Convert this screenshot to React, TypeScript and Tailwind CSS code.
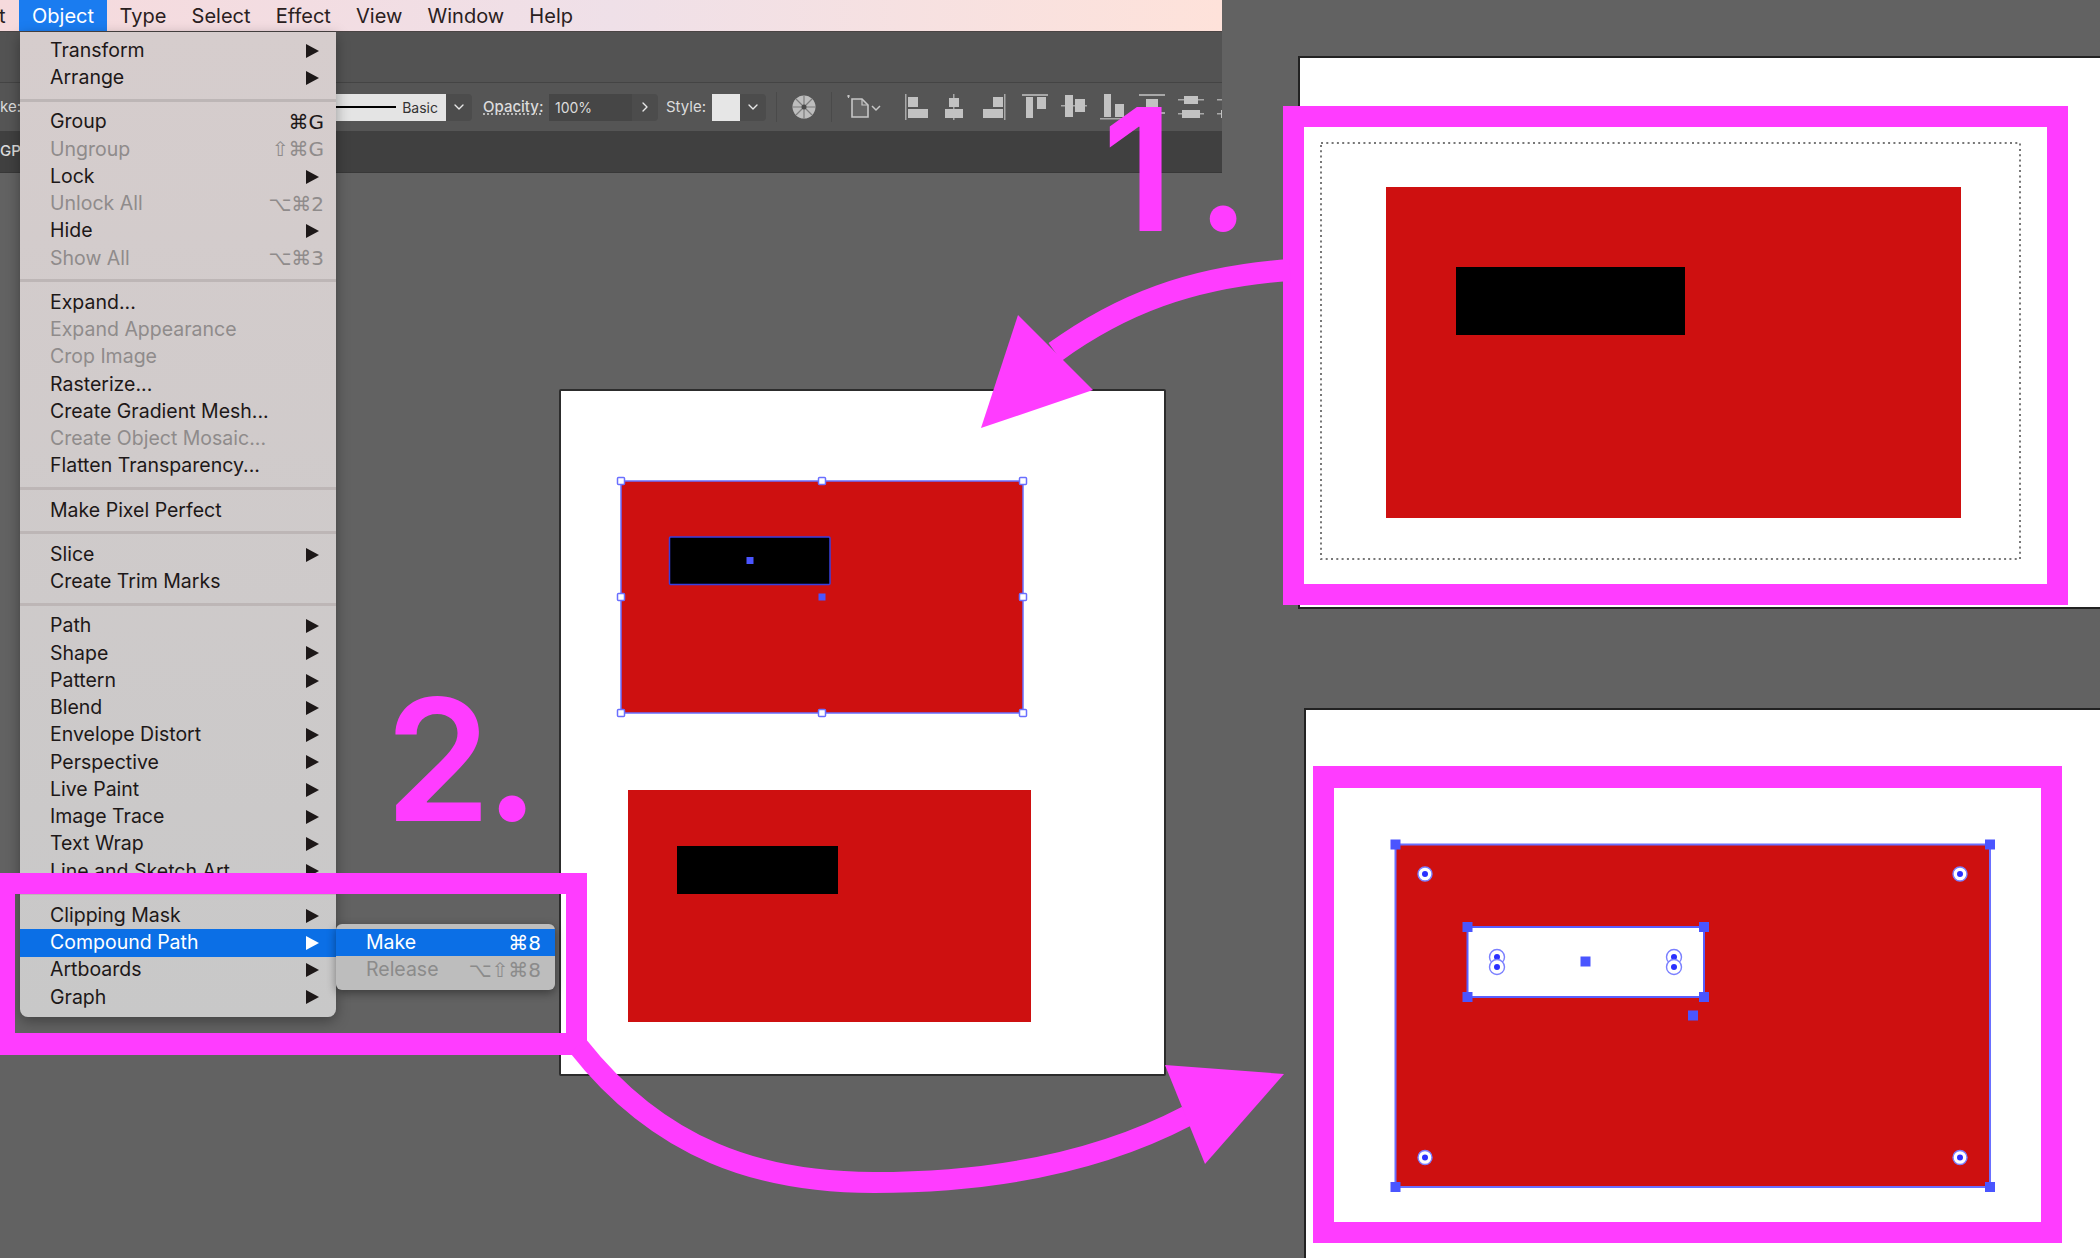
import { ChevronDown, ChevronRight } from "lucide-react";

const MAGENTA = "#ff3cff";
const BLUE = "#4a55ff";

interface MenuRow {
  label: string;
  shortcut?: string;
  arrow?: boolean;
  disabled?: boolean;
  active?: boolean;
}

const menuGroups: MenuRow[][] = [
  [
    { label: "Transform", arrow: true },
    { label: "Arrange", arrow: true },
  ],
  [
    { label: "Group", shortcut: "⌘G" },
    { label: "Ungroup", shortcut: "⇧⌘G", disabled: true },
    { label: "Lock", arrow: true },
    { label: "Unlock All", shortcut: "⌥⌘2", disabled: true },
    { label: "Hide", arrow: true },
    { label: "Show All", shortcut: "⌥⌘3", disabled: true },
  ],
  [
    { label: "Expand..." },
    { label: "Expand Appearance", disabled: true },
    { label: "Crop Image", disabled: true },
    { label: "Rasterize..." },
    { label: "Create Gradient Mesh..." },
    { label: "Create Object Mosaic...", disabled: true },
    { label: "Flatten Transparency..." },
  ],
  [{ label: "Make Pixel Perfect" }],
  [
    { label: "Slice", arrow: true },
    { label: "Create Trim Marks" },
  ],
  [
    { label: "Path", arrow: true },
    { label: "Shape", arrow: true },
    { label: "Pattern", arrow: true },
    { label: "Blend", arrow: true },
    { label: "Envelope Distort", arrow: true },
    { label: "Perspective", arrow: true },
    { label: "Live Paint", arrow: true },
    { label: "Image Trace", arrow: true },
    { label: "Text Wrap", arrow: true },
    { label: "Line and Sketch Art", arrow: true },
  ],
  [
    { label: "Clipping Mask", arrow: true },
    { label: "Compound Path", arrow: true, active: true },
    { label: "Artboards", arrow: true },
    { label: "Graph", arrow: true },
  ],
];

function Row({ row }: { row: MenuRow }) {
  const color = row.active ? "bg-[#0b6fe6] text-white" : row.disabled ? "text-[#8f8b8b]" : "text-[#1d1818]";
  return (
    <div className={`flex items-center justify-between h-[27.25px] pl-[30px] pr-[12px] ${color}`}>
      <span>{row.label}</span>
      {row.shortcut && <span className="font-['DejaVu_Sans',sans-serif] text-[20px]">{row.shortcut}</span>}
      {row.arrow && (
        <svg width="13" height="14" viewBox="0 0 13 14" className="mr-[5px]">
          <polygon points="0,0 13,7 0,14" fill="currentColor" />
        </svg>
      )}
    </div>
  );
}

function ObjectMenu() {
  return (
    <div className="absolute left-[20px] top-[32px] w-[316px] h-[985px] pt-[5px] rounded-b-lg bg-gradient-to-b from-[#d6cdcd] to-[#c8c8c8] shadow-[0_4px_14px_rgba(0,0,0,0.35)] text-[19.5px] leading-none">
      {menuGroups.map((group, i) => (
        <div key={i}>
          {i > 0 && (
            <div className="h-[17px] flex items-center">
              <div className="h-[3px] w-full bg-[#bdb6b6]" />
            </div>
          )}
          {group.map((row) => (
            <Row key={row.label} row={row} />
          ))}
        </div>
      ))}
    </div>
  );
}

function SubMenu() {
  return (
    <div className="absolute left-[336px] top-[924px] w-[219px] h-[66px] pt-[5px] rounded-md bg-[#bdbdbd] shadow-[0_3px_10px_rgba(0,0,0,0.4)] text-[19.5px] leading-none">
      <div className="flex items-center justify-between h-[27.25px] pl-[30px] pr-[14px] bg-[#0b6fe6] text-white">
        <span>Make</span>
        <span className="font-['DejaVu_Sans',sans-serif] text-[20px]">⌘8</span>
      </div>
      <div className="flex items-center justify-between h-[27px] pl-[30px] pr-[14px] text-[#8b8b8b]">
        <span>Release</span>
        <span className="font-['DejaVu_Sans',sans-serif] text-[20px]">⌥⇧⌘8</span>
      </div>
    </div>
  );
}

function MenuBar() {
  const items = ["Type", "Select", "Effect", "View", "Window", "Help"];
  return (
    <div className="flex items-center h-[32px] shrink-0 bg-gradient-to-r from-[#f6dadc] via-[#efe0e8] to-[#fee2da] text-[#2a2020] text-[20px] border-b border-[#4a4444]">
      <span className="w-[20px] -ml-[1px]">t</span>
      <span className="h-full flex items-center px-[13px] bg-[#1a7cf0] text-white">Object</span>
      {items.map((item) => (
        <span key={item} className="px-[12.6px]">
          {item}
        </span>
      ))}
    </div>
  );
}

function Dropdown({ right }: { right?: boolean }) {
  return (
    <span className="flex shrink-0 items-center justify-center w-[26px] h-[27px] bg-[#4c4c4c] rounded-r text-[#e8e8e8]">
      {right ? <ChevronRight size={16} /> : <ChevronDown size={16} />}
    </span>
  );
}

// Align and distribute icons, each a 26x26 drawing with bars and rails
const alignIcons: { rails: number[][]; bars: number[][] }[] = [
  { rails: [[0, 0, 1.5, 26]], bars: [[3, 3, 10, 10], [3, 15, 20, 9]] },
  { rails: [[9, 0, 1.5, 26]], bars: [[5, 4, 10, 9], [1, 15, 18, 9]] },
  { rails: [[21, 0, 1.5, 26]], bars: [[10, 3, 10, 10], [0, 15, 20, 9]] },
  { rails: [[0, 0, 26, 2]], bars: [[4, 3, 7, 21], [15, 3, 9, 12]] },
  { rails: [[0, 11, 26, 1.5]], bars: [[4, 1, 8, 22], [14, 5, 10, 13]] },
  { rails: [[0, 24, 26, 1.5]], bars: [[4, 0, 7, 23], [15, 10, 9, 13]] },
  { rails: [[0, 0, 26, 2], [0, 18, 26, 2]], bars: [[7, 5, 12, 8]] },
  { rails: [[0, 5, 26, 1.5], [0, 19, 26, 1.5]], bars: [[6, 2, 14, 8], [4, 16, 18, 8]] },
  { rails: [[0, 5, 26, 1.5], [0, 19, 26, 1.5]], bars: [[6, 2, 14, 8], [4, 16, 18, 8]] },
];

function AlignIcon({ rails, bars }: { rails: number[][]; bars: number[][] }) {
  return (
    <svg width="26" height="26" viewBox="0 0 26 26" className="shrink-0">
      {rails.map((r, i) => (
        <rect key={i} x={r[0]} y={r[1]} width={r[2]} height={r[3]} fill="#a8a8a8" />
      ))}
      {bars.map((r, i) => (
        <rect key={i} x={r[0]} y={r[1]} width={r[2]} height={r[3]} fill="#c2c2c2" />
      ))}
    </svg>
  );
}

function ControlBar() {
  return (
    <div className="flex items-center h-[49px] shrink-0 bg-[#555555] border-t border-[#444444] text-[#dcdcdc] text-[15px] overflow-hidden">
      <span className="w-[336px] shrink-0">ke:</span>
      <div className="flex shrink-0 items-center justify-end w-[110px] h-[27px] pr-[8px] gap-[6px] bg-[#e4e4e4] text-[#333333] text-[14px]">
        <span className="w-[60px] h-[2px] bg-black" />
        <span>Basic</span>
      </div>
      <Dropdown />
      <span className="ml-[11px] w-[57px] shrink-0 font-medium underline decoration-dotted underline-offset-2">Opacity:</span>
      <div className="ml-[9px] flex shrink-0 items-center w-[83px] h-[27px] pl-[6px] bg-[#464646] text-[14px]">100%</div>
      <Dropdown right />
      <span className="ml-[8px] w-[46px] shrink-0">Style:</span>
      <span className="w-[28px] h-[27px] shrink-0 bg-[#e6e6e6]" />
      <Dropdown />
      <span className="ml-[10px] w-px h-[30px] shrink-0 bg-[#4a4a4a]" />
      <svg width="24" height="24" viewBox="0 0 24 24" className="ml-[15px] shrink-0">
        <circle cx="12" cy="12" r="11.5" fill="#bdbdbd" />
        <g stroke="#7d7d7d" strokeWidth="1.2">
          <path d="M12 1V23M1 12H23M4 4L20 20M20 4L4 20" />
        </g>
        <circle cx="12" cy="12" r="2.5" fill="#4a4a4a" />
      </svg>
      <span className="ml-[15px] w-px h-[30px] shrink-0 bg-[#4a4a4a]" />
      <svg width="34" height="24" viewBox="0 0 34 24" className="ml-[15px] shrink-0" fill="none">
        <path d="M5 4H15L21 10V22H5Z" fill="#666666" stroke="#c6c6c6" strokeWidth="1.6" />
        <path d="M0 1H3M1.5 0V3M15 4V10H21" stroke="#c6c6c6" strokeWidth="1.2" />
        <path d="M25 11L29 15L33 11" stroke="#c6c6c6" strokeWidth="1.5" />
      </svg>
      <div className="ml-[24px] flex shrink-0 items-center gap-[13px]">
        {alignIcons.map((icon, i) => (
          <AlignIcon key={i} rails={icon.rails} bars={icon.bars} />
        ))}
      </div>
    </div>
  );
}

function TopWindow() {
  return (
    <div className="absolute left-0 top-0 w-[1222px] flex flex-col">
      <MenuBar />
      <div className="h-[50px] shrink-0 bg-[#535353]" />
      <ControlBar />
      <div className="flex items-center h-[42px] shrink-0 bg-[#404040] border-b border-[#383838] text-[#dcdcdc] text-[15px] font-medium">
        GPU
      </div>
    </div>
  );
}

function Handle({ x, y }: { x: number; y: number }) {
  return <rect x={x - 3.5} y={y - 3.5} width="7" height="7" rx="1" fill="white" stroke="#6a6fff" strokeWidth="1.5" />;
}

function Dot({ x, y, s = 7 }: { x: number; y: number; s?: number }) {
  return <rect x={x - s / 2} y={y - s / 2} width={s} height={s} fill={BLUE} />;
}

function Ring({ x, y, r = 7 }: { x: number; y: number; r?: number }) {
  return (
    <g>
      <circle cx={x} cy={y} r={r} fill="white" stroke="#7a7fff" strokeWidth="1.4" />
      <circle cx={x} cy={y} r="3" fill="#2a30ff" />
    </g>
  );
}

// Selection marks and arrows share the page's own coordinates
function Overlay() {
  const midX = [621, 822, 1023];
  const midY = [481, 597, 713];
  return (
    <svg className="absolute inset-0" width="2100" height="1258" viewBox="0 0 2100 1258" fill="none">
      <rect x="1321" y="143" width="699" height="416" stroke="#777777" strokeWidth="2" strokeDasharray="2 3.3" />

      <rect x="621" y="481" width="402" height="232" stroke="#6a6fff" strokeWidth="1.5" />
      <rect x="669.5" y="537" width="160.5" height="47.5" rx="1" stroke="#3a3fdd" strokeWidth="1.5" />
      {midX.map((x) =>
        midY.map((y) => (x === 822 && y === 597 ? null : <Handle key={`${x}-${y}`} x={x} y={y} />)),
      )}
      <Dot x={750} y={560.5} />
      <Dot x={822} y={597} />

      <rect x="1395.5" y="844.5" width="594.5" height="342.5" stroke="#6a6fff" strokeWidth="2" />
      <rect x="1467.5" y="927" width="236.5" height="70" stroke="#5a5fff" strokeWidth="2" />
      {[1395.5, 1990].map((x) => [844.5, 1187].map((y) => <Dot key={`${x}-${y}`} x={x} y={y} s={10} />))}
      {[1467.5, 1704].map((x) => [927, 997].map((y) => <Dot key={`${x}-${y}`} x={x} y={y} s={10} />))}
      {[1425, 1960].map((x) => [874, 1157.5].map((y) => <Ring key={`${x}-${y}`} x={x} y={y} />))}
      {[1497, 1674].map((x) => [957, 967].map((y) => <Ring key={`${x}-${y}`} x={x} y={y} r={7.5} />))}
      <Dot x={1585.5} y={961.5} s={10} />
      <Dot x={1693} y={1015.5} s={10} />

      <path d="M1290 270C1190 277 1120 305 1055 352" stroke={MAGENTA} strokeWidth="22" />
      <polygon points="981,428 1018,315 1093,390" fill={MAGENTA} />
      <path d="M578 1046C660 1150 760 1182.5 874 1182.5C960 1182.5 1080 1172 1187 1116" stroke={MAGENTA} strokeWidth="21" />
      <polygon points="1165,1065 1284,1074 1205,1164" fill={MAGENTA} />
    </svg>
  );
}

export default function App() {
  return (
    <div className="relative w-[2100px] h-[1258px] overflow-hidden bg-[#626262] font-['Inter',sans-serif]">
      <TopWindow />

      {/* Artboards on the canvas */}
      <div className="absolute left-[1298px] top-[56px] w-[802px] h-[553px] bg-white border-t-2 border-l-2 border-b-2 border-[#222222]" />
      <div className="absolute left-[1304px] top-[708px] w-[796px] h-[550px] bg-white border-t-2 border-l-2 border-[#222222]" />
      <div className="absolute left-[559px] top-[389px] w-[607px] h-[687px] bg-white border-2 border-[#2c2c2c] rounded-[2px]" />

      {/* Middle artboard artwork */}
      <div className="absolute left-[621px] top-[481px] w-[402px] h-[232px] bg-[#ce1010]" />
      <div className="absolute left-[669px] top-[537px] w-[161px] h-[48px] bg-black rounded-[2px]" />
      <div className="absolute left-[628px] top-[790px] w-[403px] h-[232px] bg-[#ce1010]" />
      <div className="absolute left-[677px] top-[846px] w-[161px] h-[48px] bg-black" />

      {/* Step 1 artwork */}
      <div className="absolute left-[1386px] top-[187px] w-[575px] h-[331px] bg-[#ce1010]" />
      <div className="absolute left-[1456px] top-[267px] w-[229px] h-[68px] bg-black" />

      {/* Step 2 artwork */}
      <div className="absolute left-[1395px] top-[844px] w-[595px] h-[343px] bg-[#ce1010]" />
      <div className="absolute left-[1468px] top-[927px] w-[236px] h-[70px] bg-white" />

      <ObjectMenu />
      <SubMenu />

      {/* Magenta call-out frames */}
      <div className="absolute left-[1283px] top-[106px] w-[785px] h-[499px] border-t-[21px] border-b-[21px] border-l-[21px] border-r-[21px] border-[#ff3cff]" />
      <div className="absolute left-[1313px] top-[766px] w-[749px] h-[477px] border-t-[22px] border-b-[21px] border-l-[21px] border-r-[21px] border-[#ff3cff]" />
      <div className="absolute left-0 top-[873px] w-[587px] h-[182px] border-t-[21px] border-b-[22px] border-l-[15px] border-r-[21px] border-[#ff3cff]" />

      <Overlay />

      <div className="absolute left-[1102px] top-[84px] text-[170px] leading-[170px] font-semibold text-[#ff3cff] tracking-[22px]">1.</div>
      <div className="absolute left-[385px] top-[674px] text-[170px] leading-[170px] font-semibold text-[#ff3cff] tracking-[-6px]">2.</div>
    </div>
  );
}
